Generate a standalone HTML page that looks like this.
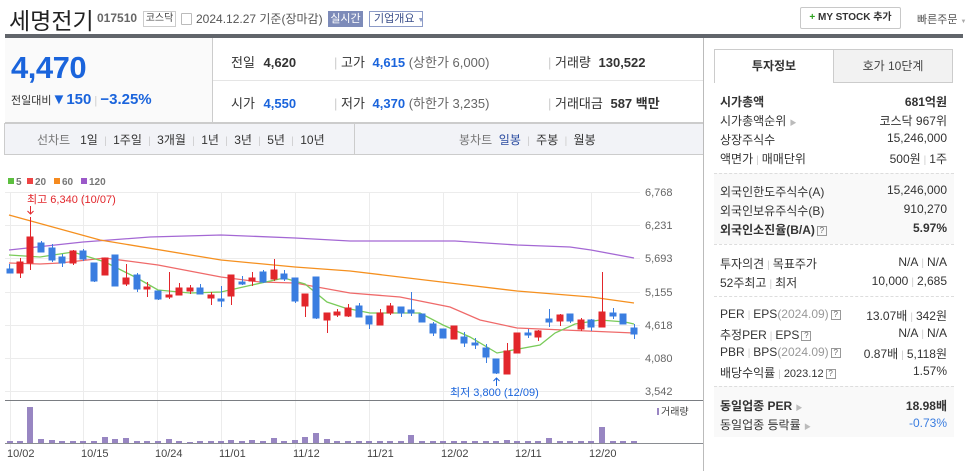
<!DOCTYPE html>
<html><head><meta charset="utf-8"><style>
*{margin:0;padding:0;box-sizing:border-box}
body{width:974px;height:471px;background:#fff;font-family:"Liberation Sans","Noto Sans CJK KR",sans-serif;position:relative;overflow:hidden;color:#333}
.a{position:absolute;white-space:nowrap}
.lbl{font-size:12px;color:#333}
.r{position:absolute;left:720px;width:227px;font-size:12px;color:#333;height:16px}
.r span.v{position:absolute;right:0;top:0}
.sep{color:#ccc;font-size:10px;margin:0 3px}
.q{display:inline-block;width:10px;height:10px;border:1px solid #999;font-size:8px;line-height:8px;text-align:center;color:#666;vertical-align:1px;margin-left:2px}
.gray{color:#999}
</style></head><body>
<div class="a" style="left:9px;top:2px;font-size:23px;color:#222;">세명전기</div>
<div class="a" style="left:97px;top:11px;font-size:12px;font-weight:bold;color:#666">017510</div>
<div class="a" style="left:143px;top:11px;width:33px;height:16px;border:1px solid #ccc;font-size:10px;line-height:14px;text-align:center;color:#444">코스닥</div>
<div class="a" style="left:181px;top:13px;width:11px;height:12px;border:1px solid #bbb;border-radius:1px"></div>
<div class="a" style="left:196px;top:10px;font-size:12px;color:#555">2024.12.27 기준(장마감)</div>
<div class="a" style="left:328px;top:11px;width:35px;height:16px;background:#7d8bb9;color:#fff;font-size:11px;line-height:16px;text-align:center">실시간</div>
<div class="a" style="left:369px;top:11px;width:54px;height:16px;border:1px solid #8d9cc8;color:#3b4f8a;font-size:11px;line-height:14px;padding-left:4px">기업개요 <span style="font-size:7px;color:#8d9cc8">▼</span></div>
<div class="a" style="left:800px;top:7px;width:101px;height:22px;border:1px solid #c8c8c8;border-radius:2px;font-size:10px;font-weight:bold;line-height:20px;text-align:center;color:#333"><span style="color:#2ea21f">+</span> MY STOCK 추가</div>
<div class="a" style="left:917px;top:11px;font-size:11px;color:#555">빠른주문 <span style="font-size:6px;color:#aaa">▼</span></div>
<div class="a" style="left:5px;top:34px;width:958px;height:4px;background:#61656b"></div>
<!-- top left -->
<div class="a" style="left:5px;top:38px;width:208px;height:85px;background:#fafafa;border-right:1px solid #ccc;border-bottom:1px solid #ccc"></div>
<div class="a" style="left:11px;top:50px;font-size:31px;font-weight:bold;color:#1a64dc;letter-spacing:-0.5px">4,470</div>
<div class="a" style="left:11px;top:91px;font-size:11px;color:#333">전일대비<span style="color:#1a64dc;font-size:15px;font-weight:bold">▼150</span> <span style="color:#ccc">|</span> <span style="color:#1a64dc;font-size:15px;font-weight:bold">−3.25%</span></div>
<div class="a" style="left:213px;top:80px;width:490px;height:1px;background:#e5e5e5"></div>
<div class="a" style="left:213px;top:122px;width:490px;height:1px;background:#ccc"></div>
<div class="a lbl" style="left:231px;top:52px;font-size:13px">전일 <b style="margin-left:5px">4,620</b></div>
<div class="a lbl" style="left:334px;top:52px;font-size:13px"><span style="color:#ccc">|</span> 고가 <b style="color:#1a64dc;margin-left:4px">4,615</b> <span style="color:#666">(상한가 6,000)</span></div>
<div class="a lbl" style="left:548px;top:52px;font-size:13px"><span style="color:#ccc">|</span> 거래량 <b style="margin-left:4px">130,522</b></div>
<div class="a lbl" style="left:231px;top:93px;font-size:13px">시가 <b style="color:#1a64dc;margin-left:5px">4,550</b></div>
<div class="a lbl" style="left:334px;top:93px;font-size:13px"><span style="color:#ccc">|</span> 저가 <b style="color:#1a64dc;margin-left:4px">4,370</b> <span style="color:#666">(하한가 3,235)</span></div>
<div class="a lbl" style="left:548px;top:93px;font-size:13px"><span style="color:#ccc">|</span> 거래대금 <b style="margin-left:4px">587 백만</b></div>
<!-- toolbar -->
<div class="a" style="left:4px;top:123px;width:700px;height:32px;background:#f2f3f7;border:1px solid #ccc"></div>
<div class="a" style="left:354px;top:123px;width:1px;height:32px;background:#ccc"></div>
<div class="a" style="left:37px;top:131px;font-size:12px;color:#333"><span style="color:#777">선차트</span>&nbsp;&nbsp; 1일 <span class="sep">|</span> 1주일 <span class="sep">|</span> 3개월 <span class="sep">|</span> 1년 <span class="sep">|</span> 3년 <span class="sep">|</span> 5년 <span class="sep">|</span> 10년</div>
<div class="a" style="left:459px;top:131px;font-size:12px;color:#333"><span style="color:#777">봉차트</span>&nbsp; <span style="color:#2b4ca0">일봉</span> <span class="sep">|</span> 주봉 <span class="sep">|</span> 월봉</div>
<div class="a" style="left:703px;top:38px;width:1px;height:433px;background:#bbb"></div>
<!-- chart -->
<svg class="a" style="left:0;top:0" width="703" height="471" viewBox="0 0 703 471">
<g font-family="Liberation Sans, sans-serif" font-size="10" fill="#777">
<rect x="8" y="178" width="6" height="6" fill="#5cbf3f"/><text x="16" y="185" font-weight="bold">5</text>
<rect x="27" y="178" width="6" height="6" fill="#ee4444"/><text x="35" y="185" font-weight="bold">20</text>
<rect x="54" y="178" width="6" height="6" fill="#f58a1f"/><text x="62" y="185" font-weight="bold">60</text>
<rect x="81" y="178" width="6" height="6" fill="#9b59c9"/><text x="89" y="185" font-weight="bold">120</text>
</g>
<g stroke="#ececec" stroke-width="1">
<line x1="5" y1="192.5" x2="640" y2="192.5"/><line x1="5" y1="225.5" x2="640" y2="225.5"/><line x1="5" y1="258.5" x2="640" y2="258.5"/><line x1="5" y1="292.5" x2="640" y2="292.5"/><line x1="5" y1="325.5" x2="640" y2="325.5"/><line x1="5" y1="358.5" x2="640" y2="358.5"/><line x1="5" y1="391.5" x2="640" y2="391.5"/>
<line x1="10.5" y1="192" x2="10.5" y2="448"/><line x1="83.5" y1="192" x2="83.5" y2="448"/><line x1="157.5" y1="192" x2="157.5" y2="448"/><line x1="221.5" y1="192" x2="221.5" y2="448"/><line x1="295.5" y1="192" x2="295.5" y2="448"/><line x1="369.5" y1="192" x2="369.5" y2="448"/><line x1="443.5" y1="192" x2="443.5" y2="448"/><line x1="517.5" y1="192" x2="517.5" y2="448"/><line x1="591.5" y1="192" x2="591.5" y2="448"/>
</g>
<line x1="5" y1="400.5" x2="703" y2="400.5" stroke="#7a7d82"/>
<line x1="5" y1="443.5" x2="703" y2="443.5" stroke="#8a8d92"/>
<g font-family="Liberation Sans, sans-serif" font-size="11" fill="#666">
<text x="645" y="196">6,768</text><text x="645" y="229">6,231</text><text x="645" y="262">5,693</text><text x="645" y="296">5,155</text><text x="645" y="329">4,618</text><text x="645" y="362">4,080</text><text x="645" y="395">3,542</text>
<text x="7" y="457" fill="#444">10/02</text><text x="81" y="457" fill="#444">10/15</text><text x="155" y="457" fill="#444">10/24</text><text x="219" y="457" fill="#444">11/01</text><text x="293" y="457" fill="#444">11/12</text><text x="367" y="457" fill="#444">11/21</text><text x="441" y="457" fill="#444">12/02</text><text x="515" y="457" fill="#444">12/11</text><text x="589" y="457" fill="#444">12/20</text>
</g>
<rect x="657" y="408" width="2" height="7" fill="#9a86c3"/><text x="661" y="415" font-size="10" fill="#444" font-family="Liberation Sans, Noto Sans CJK KR, sans-serif">거래량</text>
<g fill="none" stroke-width="1.3">
<polyline stroke="#a468d4" points="9,250 83,242 150,237 221,235 295,238 350,241 455,241 517,245 570,247 591,250 634,258"/>
<polyline stroke="#f5901f" points="9,215 100,240 221,260 295,267 350,271 450,283 517,291 591,297 634,303"/>
<polyline stroke="#ef6a6a" points="9,263 40,264 60,263 105,258 158,265 221,277 260,282 295,283 350,293 400,297 450,307 480,320 517,328 634,333"/>
<polyline stroke="#7acb5a" points="9,255 40,257 73,252 105,262 137,278 158,290 190,293 221,292 252,285 284,278 305,284 327,302 345,308 370,313 420,313 443,325 470,337 497,353 540,345 555,333 575,324 600,320 625,322 634,324"/>
</g>
<g stroke-width="1">
<g stroke="#3a7de0" fill="#3a7de0">
<line x1="9.5" y1="264" x2="9.5" y2="273"/><rect x="7" y="269" width="6" height="4"/>
<line x1="41.5" y1="241" x2="41.5" y2="252"/><rect x="38" y="243" width="6" height="9"/>
<line x1="52.5" y1="244" x2="52.5" y2="262"/><rect x="49" y="248" width="6" height="12"/>
<line x1="62.5" y1="254" x2="62.5" y2="267"/><rect x="59" y="257" width="6" height="6"/>
<line x1="83.5" y1="249" x2="83.5" y2="261"/><rect x="80" y="251" width="6" height="8"/>
<line x1="94.5" y1="263" x2="94.5" y2="282"/><rect x="91" y="263" width="6" height="18"/>
<rect x="112" y="255" width="6" height="31"/>
<line x1="137.5" y1="273" x2="137.5" y2="292"/><rect x="134" y="275" width="6" height="14"/>
<line x1="158.5" y1="291" x2="158.5" y2="300"/><rect x="155" y="291" width="6" height="8"/>
<line x1="200.5" y1="284" x2="200.5" y2="294"/><rect x="197" y="288" width="6" height="6"/>
<line x1="221.5" y1="286" x2="221.5" y2="307"/><rect x="218" y="299" width="6" height="2"/>
<line x1="242.5" y1="276" x2="242.5" y2="285"/><rect x="239" y="282" width="6" height="2"/>
<line x1="263.5" y1="270" x2="263.5" y2="283"/><rect x="260" y="272" width="6" height="10"/>
<line x1="284.5" y1="270" x2="284.5" y2="281"/><rect x="281" y="274" width="6" height="5"/>
<line x1="295.5" y1="278" x2="295.5" y2="303"/><rect x="292" y="278" width="6" height="23"/>
<line x1="316.5" y1="277" x2="316.5" y2="319"/><rect x="313" y="277" width="6" height="41"/>
<line x1="359.5" y1="303" x2="359.5" y2="317"/><rect x="356" y="306" width="6" height="11"/>
<line x1="369.5" y1="316" x2="369.5" y2="329"/><rect x="366" y="316" width="6" height="8"/>
<line x1="401.5" y1="307" x2="401.5" y2="317"/><rect x="398" y="307" width="6" height="6"/>
<line x1="411.5" y1="292" x2="411.5" y2="316"/><rect x="408" y="310" width="6" height="3"/>
<rect x="419" y="314" width="6" height="8"/>
<line x1="433.5" y1="322" x2="433.5" y2="336"/><rect x="430" y="324" width="6" height="9"/>
<line x1="443.5" y1="329" x2="443.5" y2="338"/><rect x="440" y="329" width="6" height="9"/>
<line x1="464.5" y1="332" x2="464.5" y2="347"/><rect x="461" y="337" width="6" height="6"/>
<line x1="475.5" y1="338" x2="475.5" y2="349"/><rect x="472" y="343" width="6" height="2"/>
<line x1="486.5" y1="344" x2="486.5" y2="363"/><rect x="483" y="348" width="6" height="9"/>
<line x1="496.5" y1="359" x2="496.5" y2="374"/><rect x="493" y="359" width="6" height="14"/>
<line x1="528.5" y1="329" x2="528.5" y2="338"/><rect x="525" y="333" width="6" height="2"/>
<line x1="549.5" y1="309" x2="549.5" y2="327"/><rect x="546" y="319" width="6" height="3"/>
<line x1="570.5" y1="314" x2="570.5" y2="323"/><rect x="567" y="314" width="6" height="7"/>
<line x1="591.5" y1="319" x2="591.5" y2="331"/><rect x="588" y="320" width="6" height="7"/>
<line x1="613.5" y1="308" x2="613.5" y2="319"/><rect x="610" y="313" width="6" height="3"/>
<line x1="623.5" y1="314" x2="623.5" y2="324"/><rect x="620" y="314" width="6" height="10"/>
<line x1="634.5" y1="324" x2="634.5" y2="339"/><rect x="631" y="328" width="6" height="6"/>
</g>
<g stroke="#e2262b" fill="#e2262b">
<line x1="20.5" y1="258" x2="20.5" y2="278"/><rect x="17" y="262" width="6" height="11"/>
<line x1="30.5" y1="217" x2="30.5" y2="270"/><rect x="27" y="237" width="6" height="26"/>
<line x1="73.5" y1="250" x2="73.5" y2="265"/><rect x="70" y="251" width="6" height="12"/>
<rect x="102" y="258" width="6" height="17"/>
<line x1="126.5" y1="264" x2="126.5" y2="286"/><rect x="123" y="278" width="6" height="6"/>
<line x1="147.5" y1="282" x2="147.5" y2="297"/><rect x="144" y="287" width="6" height="2"/>
<line x1="169.5" y1="272" x2="169.5" y2="299"/><rect x="166" y="295" width="6" height="2"/>
<line x1="179.5" y1="283" x2="179.5" y2="295"/><rect x="176" y="288" width="6" height="7"/>
<line x1="190.5" y1="285" x2="190.5" y2="294"/><rect x="187" y="288" width="6" height="3"/>
<line x1="211.5" y1="292" x2="211.5" y2="305"/><rect x="208" y="295" width="6" height="3"/>
<line x1="231.5" y1="275" x2="231.5" y2="305"/><rect x="228" y="275" width="6" height="21"/>
<line x1="252.5" y1="272" x2="252.5" y2="286"/><rect x="249" y="278" width="6" height="3"/>
<line x1="274.5" y1="259" x2="274.5" y2="281"/><rect x="271" y="270" width="6" height="9"/>
<line x1="305.5" y1="294" x2="305.5" y2="317"/><rect x="302" y="294" width="6" height="12"/>
<line x1="327.5" y1="313" x2="327.5" y2="333"/><rect x="324" y="313" width="6" height="7"/>
<line x1="337.5" y1="309" x2="337.5" y2="317"/><rect x="334" y="312" width="6" height="3"/>
<line x1="348.5" y1="304" x2="348.5" y2="317"/><rect x="345" y="308" width="6" height="8"/>
<line x1="380.5" y1="309" x2="380.5" y2="325"/><rect x="377" y="313" width="6" height="12"/>
<line x1="390.5" y1="303" x2="390.5" y2="315"/><rect x="387" y="306" width="6" height="7"/>
<rect x="451" y="326" width="6" height="13"/>
<line x1="507.5" y1="343" x2="507.5" y2="374"/><rect x="504" y="351" width="6" height="23"/>
<rect x="514" y="333" width="6" height="20"/>
<line x1="538.5" y1="330" x2="538.5" y2="341"/><rect x="535" y="331" width="6" height="6"/>
<line x1="560.5" y1="314" x2="560.5" y2="326"/><rect x="557" y="315" width="6" height="6"/>
<line x1="581.5" y1="318" x2="581.5" y2="331"/><rect x="578" y="320" width="6" height="9"/>
<line x1="602.5" y1="272" x2="602.5" y2="327"/><rect x="599" y="312" width="6" height="15"/>
</g>
</g>
<g fill="#9886c2">
<rect x="7" y="441" width="6" height="2"/><rect x="17" y="441" width="6" height="2"/><rect x="27" y="407" width="6" height="36"/><rect x="38" y="439" width="6" height="4"/><rect x="49" y="440" width="6" height="3"/><rect x="59" y="441" width="6" height="2"/><rect x="70" y="441" width="6" height="2"/><rect x="80" y="441" width="6" height="2"/><rect x="91" y="441" width="6" height="2"/><rect x="102" y="437" width="6" height="6"/><rect x="112" y="439" width="6" height="4"/><rect x="123" y="438" width="6" height="5"/><rect x="134" y="441" width="6" height="2"/><rect x="144" y="441" width="6" height="2"/><rect x="155" y="441" width="6" height="2"/><rect x="166" y="439" width="6" height="4"/><rect x="176" y="441" width="6" height="2"/><rect x="187" y="442" width="6" height="1"/><rect x="197" y="441" width="6" height="2"/><rect x="208" y="441" width="6" height="2"/><rect x="218" y="441" width="6" height="2"/><rect x="228" y="440" width="6" height="3"/><rect x="239" y="441" width="6" height="2"/><rect x="249" y="440" width="6" height="3"/><rect x="260" y="441" width="6" height="2"/><rect x="271" y="438" width="6" height="5"/><rect x="281" y="441" width="6" height="2"/><rect x="292" y="440" width="6" height="3"/><rect x="302" y="437" width="6" height="6"/><rect x="313" y="433" width="6" height="10"/><rect x="324" y="439" width="6" height="4"/><rect x="334" y="441" width="6" height="2"/><rect x="345" y="441" width="6" height="2"/><rect x="356" y="441" width="6" height="2"/><rect x="366" y="441" width="6" height="2"/><rect x="377" y="441" width="6" height="2"/><rect x="387" y="441" width="6" height="2"/><rect x="398" y="441" width="6" height="2"/><rect x="408" y="435" width="6" height="8"/><rect x="419" y="441" width="6" height="2"/><rect x="430" y="441" width="6" height="2"/><rect x="440" y="441" width="6" height="2"/><rect x="451" y="441" width="6" height="2"/><rect x="461" y="441" width="6" height="2"/><rect x="472" y="441" width="6" height="2"/><rect x="483" y="441" width="6" height="2"/><rect x="493" y="441" width="6" height="2"/><rect x="504" y="440" width="6" height="3"/><rect x="514" y="441" width="6" height="2"/><rect x="525" y="441" width="6" height="2"/><rect x="535" y="441" width="6" height="2"/><rect x="546" y="438" width="6" height="5"/><rect x="557" y="441" width="6" height="2"/><rect x="567" y="441" width="6" height="2"/><rect x="578" y="441" width="6" height="2"/><rect x="588" y="441" width="6" height="2"/><rect x="599" y="427" width="6" height="16"/><rect x="610" y="441" width="6" height="2"/><rect x="620" y="441" width="6" height="2"/><rect x="631" y="441" width="6" height="2"/>
</g>
<text x="27" y="203" font-size="11" fill="#e2262b" font-family="Liberation Sans, Noto Sans CJK KR, sans-serif">최고 6,340 (10/07)</text>
<path d="M30.5 206 V214 M27.5 211 L30.5 214 L33.5 211" stroke="#e2262b" fill="none"/>
<text x="450" y="396" font-size="11" fill="#1a64dc" font-family="Liberation Sans, Noto Sans CJK KR, sans-serif">최저 3,800 (12/09)</text>
<path d="M496.5 378 V386 M493.5 381 L496.5 378 L499.5 381" stroke="#1a64dc" fill="none"/>
</svg>
<!-- right panel -->
<div class="a" style="left:714px;top:49px;width:120px;height:34px;border:1px solid #ccc;border-bottom:none;background:#fff;font-size:12px;font-weight:bold;text-align:center;line-height:32px">투자정보</div>
<div class="a" style="left:833px;top:49px;width:120px;height:34px;border:1px solid #ccc;background:#f2f2f2;font-size:12px;text-align:center;line-height:32px;color:#444">호가 10단계</div>
<div class="a" style="left:714px;top:173px;width:240px;height:71px;background:#f9f9f9;border-top:1px dashed #ddd"></div>
<div class="a" style="left:714px;top:296px;width:240px;height:1px;border-top:1px dashed #ddd"></div>
<div class="a" style="left:714px;top:226px;width:240px;height:1px"></div>
<div class="a" style="left:714px;top:386px;width:240px;height:51px;background:#f9f9f9;border-top:1px dashed #ddd"></div>
<div class="a" style="left:714px;top:244px;width:240px;height:1px;border-top:1px dashed #ddd"></div>
<div class="r" style="top:93px"><b>시가총액</b><span class="v"><b>681억원</b></span></div>
<div class="r" style="top:112px">시가총액순위 <span style="color:#bbb;font-size:7px">▶</span><span class="v">코스닥 967위</span></div>
<div class="r" style="top:131px">상장주식수<span class="v">15,246,000</span></div>
<div class="r" style="top:150px">액면가<span class="sep">|</span>매매단위<span class="v">500원<span class="sep">|</span>1주</span></div>
<div class="r" style="top:183px">외국인한도주식수(A)<span class="v">15,246,000</span></div>
<div class="r" style="top:202px">외국인보유주식수(B)<span class="v">910,270</span></div>
<div class="r" style="top:221px"><b>외국인소진율(B/A)</b><span class="q">?</span><span class="v"><b>5.97%</b></span></div>
<div class="r" style="top:255px">투자의견<span class="sep">|</span>목표주가<span class="v">N/A<span class="sep">|</span>N/A</span></div>
<div class="r" style="top:274px">52주최고<span class="sep">|</span>최저<span class="v">10,000<span class="sep">|</span>2,685</span></div>
<div class="r" style="top:307px">PER<span class="sep">|</span>EPS<span class="gray">(2024.09)</span><span class="q">?</span><span class="v">13.07배<span class="sep">|</span>342원</span></div>
<div class="r" style="top:326px">추정PER<span class="sep">|</span>EPS<span class="q">?</span><span class="v">N/A<span class="sep">|</span>N/A</span></div>
<div class="r" style="top:345px">PBR<span class="sep">|</span>BPS<span class="gray">(2024.09)</span><span class="q">?</span><span class="v">0.87배<span class="sep">|</span>5,118원</span></div>
<div class="r" style="top:364px">배당수익률<span class="sep">|</span><span style="font-size:11px">2023.12</span><span class="q">?</span><span class="v">1.57%</span></div>
<div class="r" style="top:397px"><b>동일업종 PER</b> <span style="color:#bbb;font-size:7px">▶</span><span class="v"><b>18.98배</b></span></div>
<div class="r" style="top:416px">동일업종 등락률 <span style="color:#bbb;font-size:7px">▶</span><span class="v" style="color:#3a7de0">-0.73%</span></div>
</body></html>
